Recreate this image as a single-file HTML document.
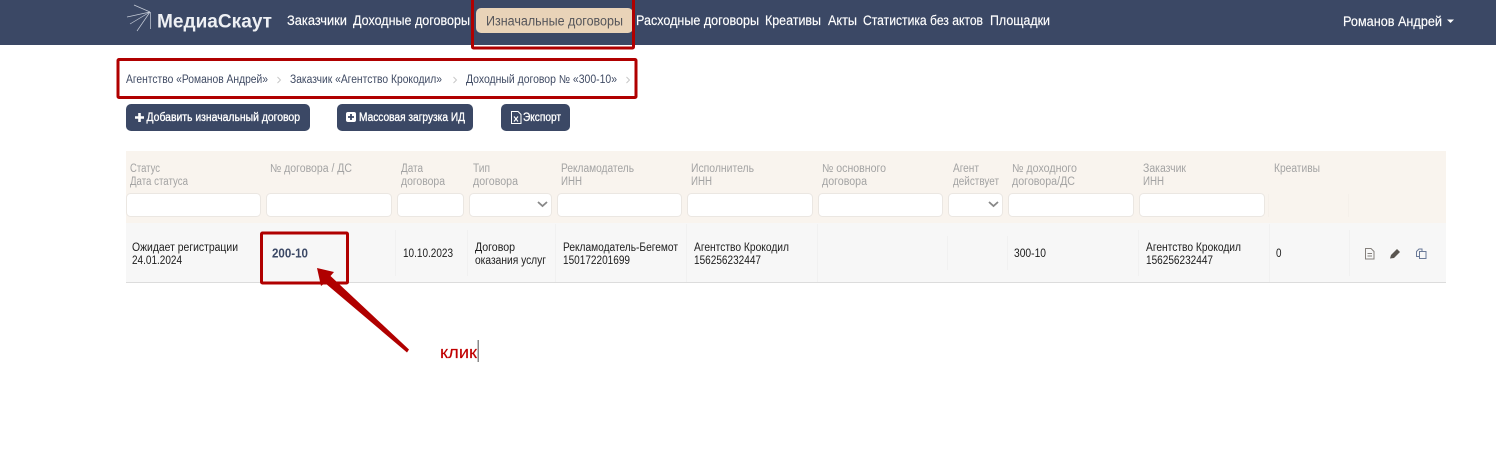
<!DOCTYPE html>
<html lang="ru">
<head>
<meta charset="utf-8">
<title>МедиаСкаут</title>
<style>
html,body{margin:0;padding:0;background:#fff;width:1496px;height:456px;overflow:hidden}
svg{display:block}
text{font-family:"Liberation Sans","DejaVu Sans",sans-serif}
.nav{font-size:13.5px;fill:#fff;stroke:#fff;stroke-width:.15}
.bc{font-size:11.5px;fill:#3f4a63}
.btn{font-size:11.5px;fill:#fff;stroke:#fff;stroke-width:.3}
.th{font-size:11.5px;fill:#a3a3a3}
.td{font-size:11.5px;fill:#1c1c1c}
.inp{fill:#fff;stroke:#ebe7e2;stroke-width:1}
.red{fill:none;stroke:#b00000;stroke-width:3}
.vl{stroke:#f1f1f1;stroke-width:1}
.vh{stroke:#f5f0ea;stroke-width:1}
.chev{fill:none;stroke:#888;stroke-width:1.8}
</style>
</head>
<body>
<svg width="1496" height="456" viewBox="0 0 1496 456" xmlns="http://www.w3.org/2000/svg">
<rect width="1496" height="456" fill="#fff"/>
<rect width="1496" height="45" fill="#3b4865"/>

<!-- logo -->
<g stroke="#c6ccd8" stroke-width="0.7" fill="none">
<path d="M150.500 12V29"/>
<path d="M150 12L134 5M150 12L127 17M150 12L130 24M150 12L137 31"/>
</g>
<text x="157" y="27.500" font-size="19" font-weight="bold" fill="#eef0f4" textLength="115" lengthAdjust="spacingAndGlyphs">МедиаСкаут</text>

<!-- nav -->
<text class="nav" x="287" y="25" textLength="60" lengthAdjust="spacingAndGlyphs">Заказчики</text>
<text class="nav" x="353" y="25" textLength="117" lengthAdjust="spacingAndGlyphs">Доходные договоры</text>
<rect x="476" y="8" width="157" height="25" rx="5" fill="#e9d3b8"/>
<text x="486" y="25.500" font-size="13.500" fill="#55555a" textLength="137" lengthAdjust="spacingAndGlyphs">Изначальные договоры</text>
<text class="nav" x="636" y="25" textLength="123" lengthAdjust="spacingAndGlyphs">Расходные договоры</text>
<text class="nav" x="765" y="25" textLength="56" lengthAdjust="spacingAndGlyphs">Креативы</text>
<text class="nav" x="828" y="25" textLength="29" lengthAdjust="spacingAndGlyphs">Акты</text>
<text class="nav" x="863" y="25" textLength="120" lengthAdjust="spacingAndGlyphs">Статистика без актов</text>
<text class="nav" x="990" y="25" textLength="60" lengthAdjust="spacingAndGlyphs">Площадки</text>
<text class="nav" x="1343" y="26" textLength="99" lengthAdjust="spacingAndGlyphs">Романов Андрей</text>
<path d="M1447 19.500h7l-3.500 3.500z" fill="#fff"/>

<!-- breadcrumbs -->
<text class="bc" x="126" y="83" textLength="142" lengthAdjust="spacingAndGlyphs">Агентство «Романов Андрей»</text>
<path d="M277.500 77l3 3-3 3" fill="none" stroke="#c4c4c4" stroke-width="0.9"/>
<text class="bc" x="290" y="83" textLength="152" lengthAdjust="spacingAndGlyphs">Заказчик «Агентство Крокодил»</text>
<path d="M453.500 77l3 3-3 3" fill="none" stroke="#c4c4c4" stroke-width="0.9"/>
<text class="bc" x="466" y="83" textLength="151" lengthAdjust="spacingAndGlyphs">Доходный договор № «300-10»</text>
<path d="M626.500 77l3 3-3 3" fill="none" stroke="#c4c4c4" stroke-width="0.9"/>

<!-- buttons -->
<rect x="126" y="104" width="184" height="27" rx="5" fill="#3b4865"/>
<path d="M135 117.500h9M139.500 113v9" stroke="#fff" stroke-width="2.600" fill="none"/>
<text class="btn" x="146.500" y="121" textLength="153.500" lengthAdjust="spacingAndGlyphs">Добавить изначальный договор</text>
<rect x="337" y="104" width="136" height="27" rx="5" fill="#3b4865"/>
<rect x="346" y="112" width="10" height="10" rx="2" fill="#fff"/>
<path d="M348 117h6M351 114v6" stroke="#3b4865" stroke-width="1.800" fill="none"/>
<text class="btn" x="359" y="121" textLength="106" lengthAdjust="spacingAndGlyphs">Массовая загрузка ИД</text>
<rect x="501" y="104" width="69" height="27" rx="5" fill="#3b4865"/>
<path d="M511.500 111.500h6.500l3 3v9h-9.500z" fill="none" stroke="#fff" stroke-width="1"/>
<path d="M514 116.500l4 5M518 116.500l-4 5" stroke="#fff" stroke-width="1.100" fill="none"/>
<text class="btn" x="523" y="121" textLength="38" lengthAdjust="spacingAndGlyphs">Экспорт</text>

<!-- table -->
<rect x="126" y="151" width="1320" height="72" fill="#f9f4ee"/>
<rect x="126" y="223" width="1320" height="59" fill="#f7f7f7"/>
<rect x="126" y="282" width="1320" height="1" fill="#dcdcdc"/>

<g>
<text class="th" x="130" y="172" textLength="30" lengthAdjust="spacingAndGlyphs">Статус</text>
<text class="th" x="130" y="185" textLength="58" lengthAdjust="spacingAndGlyphs">Дата статуса</text>
<text class="th" x="270" y="172" textLength="82" lengthAdjust="spacingAndGlyphs">№ договора / ДС</text>
<text class="th" x="401" y="172" textLength="22" lengthAdjust="spacingAndGlyphs">Дата</text>
<text class="th" x="401" y="185" textLength="44" lengthAdjust="spacingAndGlyphs">договора</text>
<text class="th" x="473" y="172" textLength="17" lengthAdjust="spacingAndGlyphs">Тип</text>
<text class="th" x="473" y="185" textLength="45" lengthAdjust="spacingAndGlyphs">договора</text>
<text class="th" x="561" y="172" textLength="73" lengthAdjust="spacingAndGlyphs">Рекламодатель</text>
<text class="th" x="561" y="185" textLength="21" lengthAdjust="spacingAndGlyphs">ИНН</text>
<text class="th" x="691" y="172" textLength="63" lengthAdjust="spacingAndGlyphs">Исполнитель</text>
<text class="th" x="691" y="185" textLength="21" lengthAdjust="spacingAndGlyphs">ИНН</text>
<text class="th" x="822" y="172" textLength="64" lengthAdjust="spacingAndGlyphs">№ основного</text>
<text class="th" x="822" y="185" textLength="45" lengthAdjust="spacingAndGlyphs">договора</text>
<text class="th" x="953" y="172" textLength="26" lengthAdjust="spacingAndGlyphs">Агент</text>
<text class="th" x="953" y="185" textLength="46" lengthAdjust="spacingAndGlyphs">действует</text>
<text class="th" x="1012" y="172" textLength="65" lengthAdjust="spacingAndGlyphs">№ доходного</text>
<text class="th" x="1012" y="185" textLength="63" lengthAdjust="spacingAndGlyphs">договора/ДС</text>
<text class="th" x="1143" y="172" textLength="43" lengthAdjust="spacingAndGlyphs">Заказчик</text>
<text class="th" x="1143" y="185" textLength="21" lengthAdjust="spacingAndGlyphs">ИНН</text>
<text class="th" x="1274" y="172" textLength="46" lengthAdjust="spacingAndGlyphs">Креативы</text>
</g>

<!-- filters -->
<rect class="inp" x="126.500" y="193.500" width="134" height="23" rx="4"/>
<rect class="inp" x="266.500" y="193.500" width="125" height="23" rx="4"/>
<rect class="inp" x="397.500" y="193.500" width="66" height="23" rx="4"/>
<rect class="inp" x="469.500" y="193.500" width="82" height="23" rx="4"/>
<path class="chev" d="M538 202l4.500 4 4.500-4"/>
<rect class="inp" x="557.500" y="193.500" width="124" height="23" rx="4"/>
<rect class="inp" x="687.500" y="193.500" width="125" height="23" rx="4"/>
<rect class="inp" x="818.500" y="193.500" width="124" height="23" rx="4"/>
<rect class="inp" x="948.500" y="193.500" width="54" height="23" rx="4"/>
<path class="chev" d="M989 202l4.500 4 4.500-4"/>
<rect class="inp" x="1008.500" y="193.500" width="125" height="23" rx="4"/>
<rect class="inp" x="1139.500" y="193.500" width="125" height="23" rx="4"/>
<path class="vh" d="M1268.500 194v23M1348.500 194v23"/>

<!-- row separators -->
<path class="vl" d="M395.500 230v46M467.500 230v46M555.500 224v58M686.500 224v58M817.500 224v58M947.500 236v34M1007.500 236v34M1138.500 230v46M1269.500 224v58M1349.500 230v46"/>

<!-- row -->
<text class="td" x="132" y="251" textLength="106" lengthAdjust="spacingAndGlyphs">Ожидает регистрации</text>
<text class="td" x="132" y="264" textLength="50" lengthAdjust="spacingAndGlyphs">24.01.2024</text>
<text x="272" y="257.500" font-size="12.500" font-weight="bold" fill="#3b4865" textLength="36" lengthAdjust="spacingAndGlyphs">200-10</text>
<text class="td" x="403" y="257" textLength="50" lengthAdjust="spacingAndGlyphs">10.10.2023</text>
<text class="td" x="475" y="251" textLength="40" lengthAdjust="spacingAndGlyphs">Договор</text>
<text class="td" x="475" y="264" textLength="71" lengthAdjust="spacingAndGlyphs">оказания услуг</text>
<text class="td" x="563" y="251" textLength="115" lengthAdjust="spacingAndGlyphs">Рекламодатель-Бегемот</text>
<text class="td" x="563" y="264" textLength="67" lengthAdjust="spacingAndGlyphs">150172201699</text>
<text class="td" x="694" y="251" textLength="95" lengthAdjust="spacingAndGlyphs">Агентство Крокодил</text>
<text class="td" x="694" y="264" textLength="67" lengthAdjust="spacingAndGlyphs">156256232447</text>
<text class="td" x="1014" y="257" textLength="32" lengthAdjust="spacingAndGlyphs">300-10</text>
<text class="td" x="1146" y="251" textLength="95" lengthAdjust="spacingAndGlyphs">Агентство Крокодил</text>
<text class="td" x="1146" y="264" textLength="67" lengthAdjust="spacingAndGlyphs">156256232447</text>
<text class="td" x="1276" y="257" textLength="5.500" lengthAdjust="spacingAndGlyphs">0</text>

<!-- row icons -->
<g fill="none" stroke="#85807c" stroke-width="1">
<path d="M1365.500 248.500h5.500l3 3v7.500h-8.500z"/>
<path d="M1367.500 253.500h4.500M1367.500 256h4.500" stroke-width="1"/>
</g>
<path d="M1390 258.500l1-3.500 6-6 3 3-6 6z" fill="#5a5550"/>
<g fill="none" stroke="#6a7a98" stroke-width="1">
<path d="M1416.500 254v-2.500l2.500-2.500h3v2M1416.500 254v2.500h3"/>
<path d="M1419.500 251.500h6.500v7h-6.500z"/>
</g>

<!-- annotations -->
<rect class="red" x="472.500" y="-3" width="161" height="51" rx="1"/>
<rect class="red" x="118" y="59.500" width="518" height="38" rx="1"/>
<rect class="red" x="261.500" y="233" width="86" height="50" rx="1"/>
<path d="M317 268L334 272L330.500 276L409 349.500L407 352.500L325 283L321 286Z" fill="#b00000"/>
<text x="440" y="358" font-size="16.500" fill="#c00000" stroke="#c00000" stroke-width=".15" textLength="37" lengthAdjust="spacingAndGlyphs">клик</text>
<rect x="477.500" y="340" width="1.500" height="22" fill="#8a8a8a"/>
</svg>
</body>
</html>
